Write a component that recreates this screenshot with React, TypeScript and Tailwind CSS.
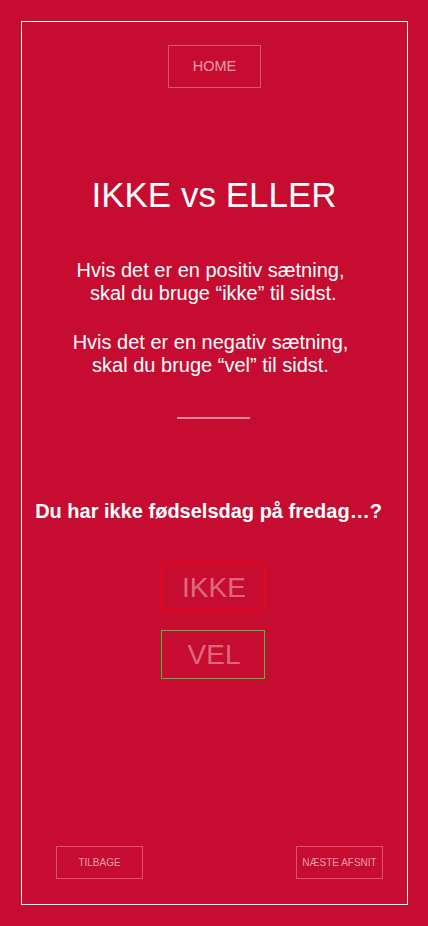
import React from "react";

export default function App() {
  return (
    <div className="min-h-[926px] w-[428px] bg-[#c60c30] pt-[21px] pl-[21px] pr-[20px] pb-[21px]" style={{ fontFamily: '"Liberation Sans", Arial, sans-serif' }}>
      <div className="h-[884px] border border-white flex flex-col items-center text-white">
        <button className="mt-[23px] w-[93px] h-[43px] border border-white/30 text-[14.5px] text-white/60 flex items-center justify-center">
          HOME
        </button>
        <h1 className="mt-[86px] mr-[1px] text-[35px] leading-[42px]">IKKE vs ELLER</h1>
        <div className="mt-[43px] text-[20px] leading-[23px] text-center pr-[8px]">
          <p>Hvis det er en positiv sætning,</p>
          <p>&nbsp;skal du bruge “ikke” til sidst.</p>
          <p className="mt-[26px]">Hvis det er en negativ sætning,</p>
          <p>skal du bruge “vel” til sidst.</p>
        </div>
        <div className="mt-[40px] mr-[2px] w-[73px] h-[2px] bg-white/50" />
        <p className="mt-[81px] mr-[12px] text-[20px] font-bold leading-[22px]">Du har ikke fødselsdag på fredag…?</p>
        <button className="mt-[41px] mr-[4px] w-[104px] h-[49px] border border-[#ff0000] pl-[3px] text-[28px] text-white/40 flex items-center justify-center">
          IKKE
        </button>
        <button className="mt-[18px] mr-[4px] w-[104px] h-[49px] border border-[#32cd32] pl-[3px] text-[28px] text-white/40 flex items-center justify-center">
          VEL
        </button>
        <div className="mt-auto mb-[25px] w-full flex justify-between pl-[34px] pr-[24px]">
          <button className="w-[87px] h-[33px] border border-white/30 text-[10px] text-white/60 flex items-center justify-center">TILBAGE</button>
          <button className="w-[87px] h-[33px] border border-white/30 text-[10px] text-white/60 flex items-center justify-center">NÆSTE AFSNIT</button>
        </div>
      </div>
    </div>
  );
}
